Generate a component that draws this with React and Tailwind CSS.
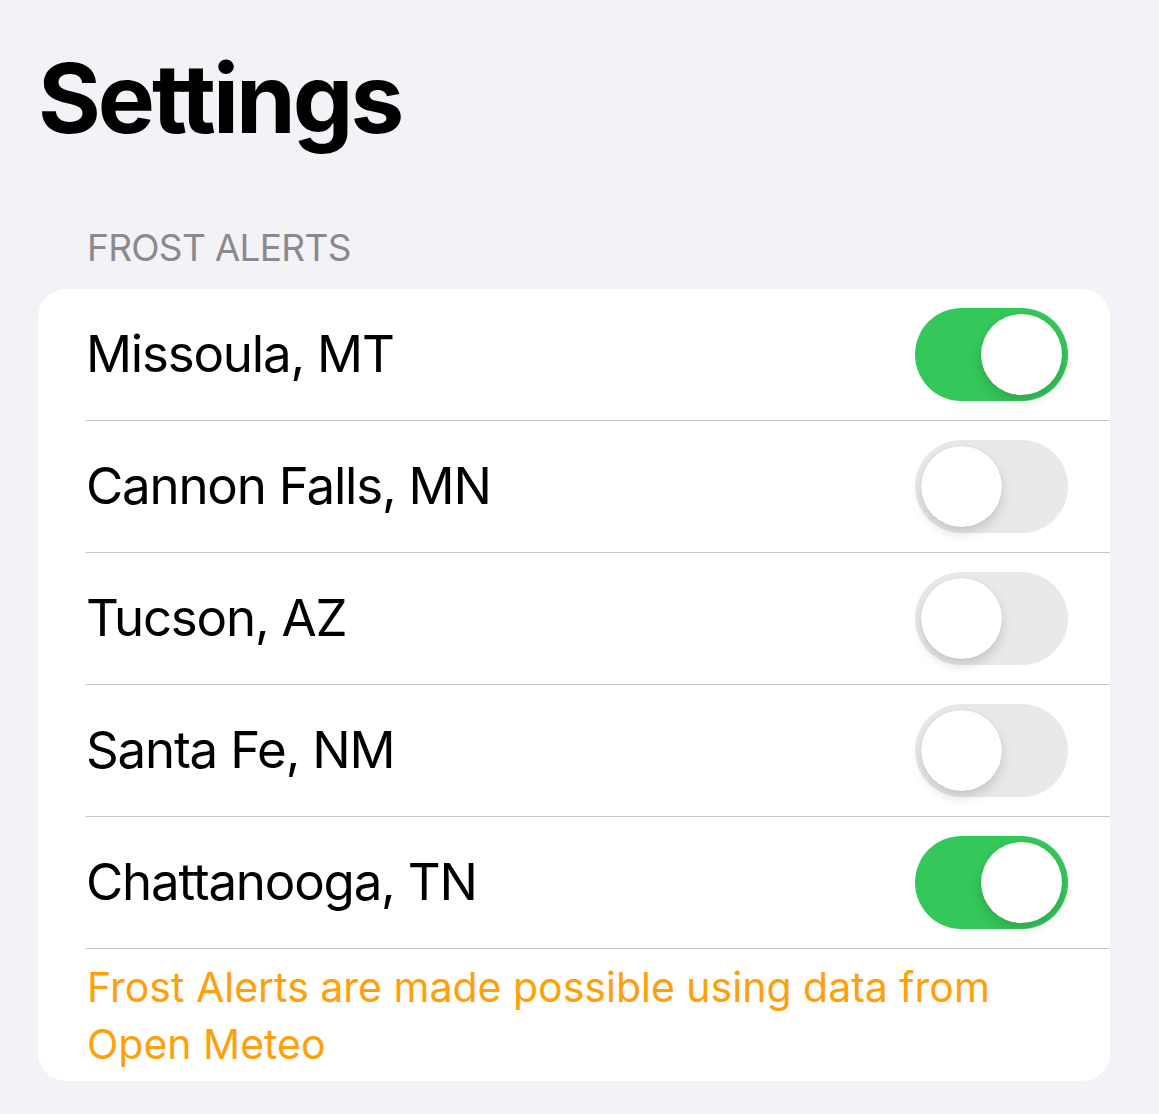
import { useState } from 'react';

const Toggle = ({ on, onChange }) => (
  <button
    onClick={onChange}
    className={`relative w-[153px] h-[93px] rounded-full shrink-0 transition-colors ${
      on ? 'bg-[#34c759]' : 'bg-[#e9e9eb]'
    }`}
  >
    <span
      className={`absolute top-[6px] w-[81px] h-[81px] rounded-full bg-white shadow-[0_6px_12px_rgba(0,0,0,0.15),0_0_1px_rgba(0,0,0,0.2)] ${
        on ? 'left-[66px]' : 'left-[6px]'
      }`}
    />
  </button>
);

export default function App() {
  const [cities, setCities] = useState([
    { name: 'Missoula, MT', on: true },
    { name: 'Cannon Falls, MN', on: false },
    { name: 'Tucson, AZ', on: false },
    { name: 'Santa Fe, NM', on: false },
    { name: 'Chattanooga, TN', on: true },
  ]);

  const toggle = (i) =>
    setCities(cities.map((c, j) => (j === i ? { ...c, on: !c.on } : c)));

  return (
    <div className="min-h-screen bg-[#f2f2f7] font-['Inter','Liberation_Sans',sans-serif] pt-[40px] pb-[34px]">
      <h1 className="pl-[38px] text-[96px] font-bold leading-[116px] tracking-[-3px] text-black">Settings</h1>

      <div className="pl-[38px] pr-[49px] mt-[70px]">
        <h3 className="pl-[49px] text-[37px] leading-[44px] tracking-[-0.7px] text-[#8a8a8e] uppercase mb-[19px]">
          Frost Alerts
        </h3>

        <div className="bg-white rounded-[28px] overflow-hidden">
          {cities.map((city, i) => (
            <div key={city.name} className="pl-[48px]">
              <div className="h-[132px] flex items-center justify-between pr-[42px] border-b border-[#c6c6c8]">
                <span className="text-[51px] text-black tracking-[-1.2px]">{city.name}</span>
                <Toggle on={city.on} onChange={() => toggle(i)} />
              </div>
            </div>
          ))}
          <p className="pl-[49px] pr-[42px] pt-[10px] pb-[8px] text-[41px] leading-[57px] text-[#ff9f0a]">
            Frost Alerts are made possible using data from
            <br />
            Open Meteo
          </p>
        </div>
      </div>
    </div>
  );
}
